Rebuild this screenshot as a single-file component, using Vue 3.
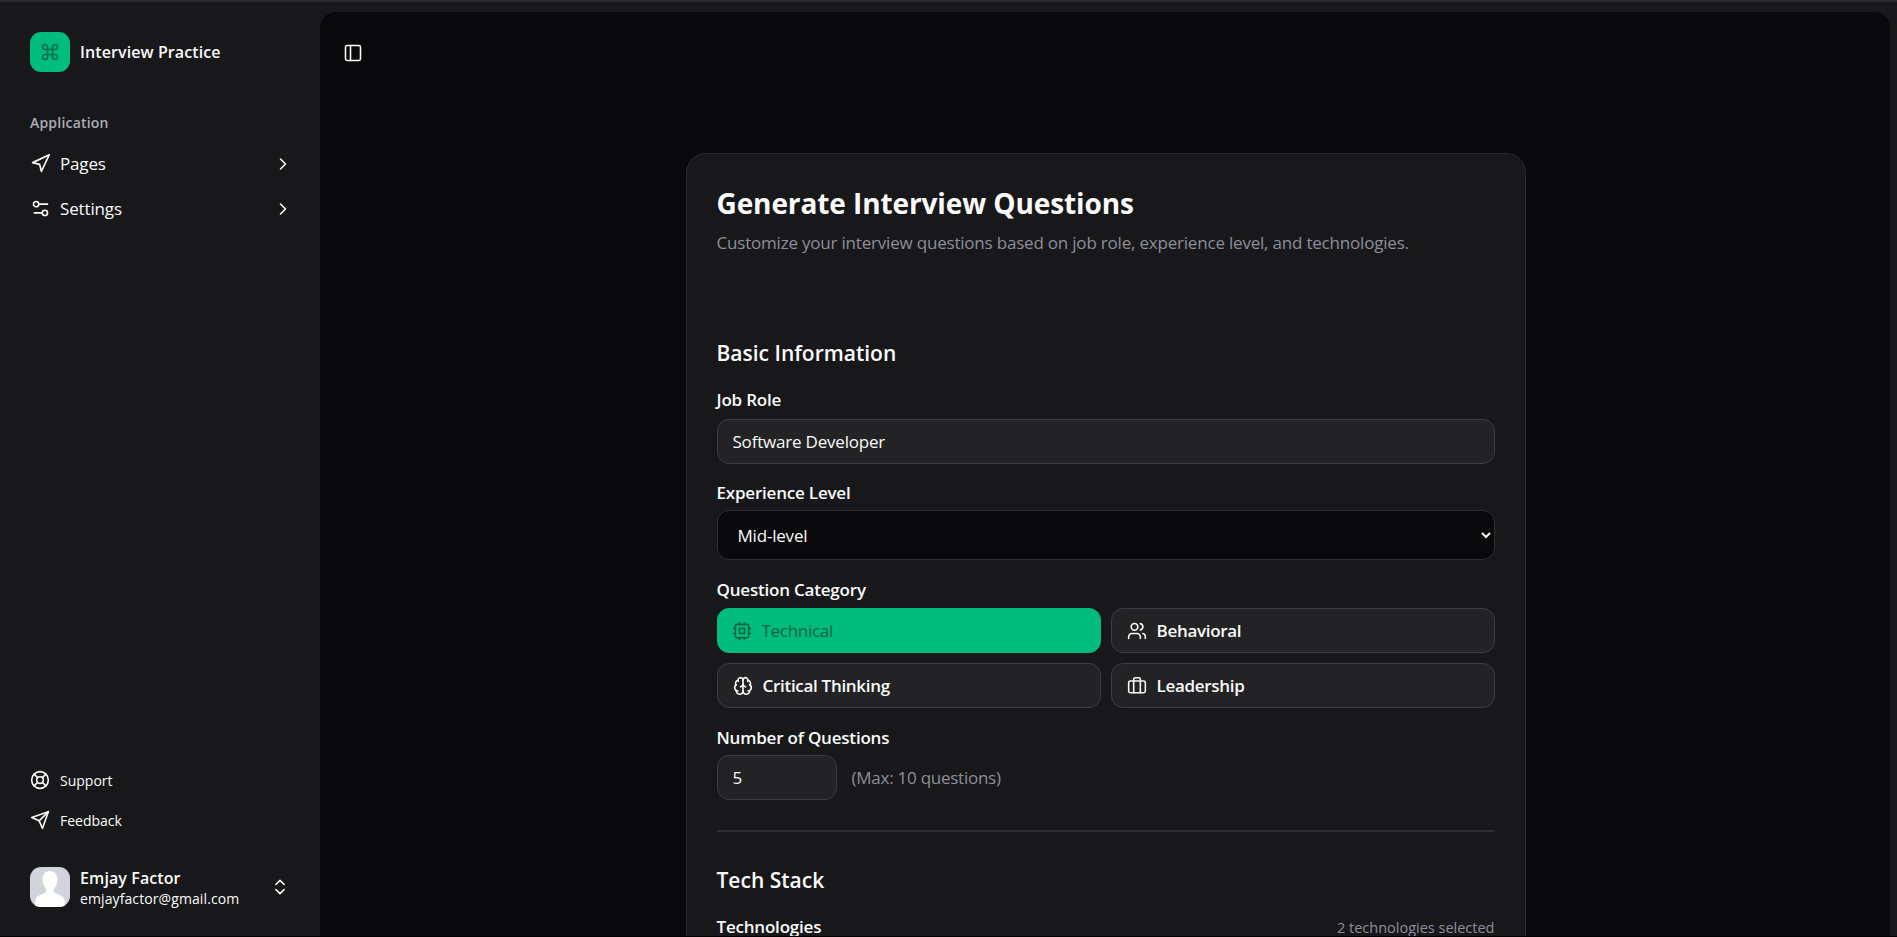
<script setup>
import { ref } from "vue";

const categories = [
  { key: "technical", label: "Technical", active: true },
  { key: "behavioral", label: "Behavioral", active: false },
  { key: "critical", label: "Critical Thinking", active: false },
  { key: "leadership", label: "Leadership", active: false },
];
const jobRole = ref("Software Developer");
const level = ref("Mid-level");
const count = ref(5);
</script>

<template>
  <div class="shell">
    <aside class="sidebar">
      <div class="brand">
        <span class="brand__logo">
          <svg class="icon" viewBox="0 0 24 24"><path d="M15 6v12a3 3 0 1 0 3-3H6a3 3 0 1 0 3 3V6a3 3 0 1 0-3 3h12a3 3 0 1 0-3-3" /></svg>
        </span>
        <span class="brand__name">Interview Practice</span>
      </div>

      <div class="nav-group">
        <div class="nav-group__label">Application</div>
        <a class="nav-item">
          <svg class="icon" viewBox="0 0 24 24"><polygon points="3 11 22 2 13 21 11 13 3 11" /></svg>
          <span>Pages</span>
          <svg class="icon chevron" viewBox="0 0 24 24"><path d="m9 18 6-6-6-6" /></svg>
        </a>
        <a class="nav-item">
          <svg class="icon" viewBox="0 0 24 24"><path d="M20 7h-9" /><path d="M14 17H5" /><circle cx="17" cy="17" r="3" /><circle cx="7" cy="7" r="3" /></svg>
          <span>Settings</span>
          <svg class="icon chevron" viewBox="0 0 24 24"><path d="m9 18 6-6-6-6" /></svg>
        </a>
      </div>

      <div class="sidebar__bottom">
        <a class="sub-item">
          <svg class="icon" viewBox="0 0 24 24"><circle cx="12" cy="12" r="10" /><path d="m4.930 4.930 4.240 4.240" /><path d="m14.830 9.170 4.240-4.240" /><path d="m14.830 14.830 4.240 4.240" /><path d="m9.170 14.830-4.240 4.240" /><circle cx="12" cy="12" r="4" /></svg>
          <span>Support</span>
        </a>
        <a class="sub-item">
          <svg class="icon" viewBox="0 0 24 24"><path d="m22 2-7 20-4-9-9-4Z" /><path d="M22 2 11 13" /></svg>
          <span>Feedback</span>
        </a>
        <div class="user">
          <span class="user__avatar">
            <svg viewBox="0 0 40 40"><path d="M20 4c-4.500 0-7.500 3.500-7.500 8.500 0 3.500 1.500 7 3.500 9 .4 1.500.3 3-.5 4-2 1.500-7 2.500-9 5-1.200 1.500-1.500 5-1.500 9.500h30c0-4.500-.3-8-1.500-9.500-2-2.500-7-3.500-9-5-.8-1-.9-2.500-.5-4 2-2 3.500-5.500 3.500-9C27.500 7.500 24.500 4 20 4Z" /></svg>
          </span>
          <span class="user__text">
            <span class="user__name">Emjay Factor</span>
            <span class="user__email">emjayfactor@gmail.com</span>
          </span>
          <svg class="icon user__caret" viewBox="0 0 24 24"><path d="m7 15 5 5 5-5" /><path d="m7 9 5-5 5 5" /></svg>
        </div>
      </div>
    </aside>

    <main class="main">
      <button class="toggle" type="button" aria-label="Toggle sidebar">
        <svg class="icon" viewBox="0 0 24 24"><rect x="3" y="3" width="18" height="18" rx="2" /><path d="M9 3v18" /></svg>
      </button>

      <section class="card">
        <h1>Generate Interview Questions</h1>
        <p class="card__sub">Customize your interview questions based on job role, experience level, and technologies.</p>

        <h2 class="section-title">Basic Information</h2>

        <label class="field-label field-label--first">Job Role</label>
        <input v-model="jobRole" class="input" type="text" />

        <label class="field-label field-label--level">Experience Level</label>
        <select v-model="level" class="select">
          <option>Junior</option>
          <option>Mid-level</option>
          <option>Senior</option>
        </select>

        <label class="field-label">Question Category</label>
        <div class="cat-grid">
          <button
            v-for="cat in categories"
            :key="cat.key"
            type="button"
            class="cat"
            :class="{ 'cat--active': cat.active }"
          >
            <svg v-if="cat.key === 'technical'" class="icon" viewBox="0 0 24 24"><rect x="4" y="4" width="16" height="16" rx="2" /><rect x="9" y="9" width="6" height="6" /><path d="M15 2v2M15 20v2M2 15h2M2 9h2M20 15h2M20 9h2M9 2v2M9 20v2" /></svg>
            <svg v-else-if="cat.key === 'behavioral'" class="icon" viewBox="0 0 24 24"><path d="M16 21v-2a4 4 0 0 0-4-4H6a4 4 0 0 0-4 4v2" /><circle cx="9" cy="7" r="4" /><path d="M22 21v-2a4 4 0 0 0-3-3.870" /><path d="M16 3.130a4 4 0 0 1 0 7.750" /></svg>
            <svg v-else-if="cat.key === 'critical'" class="icon" viewBox="0 0 24 24"><path d="M12 18V5" /><path d="M15 13a4.170 4.170 0 0 1-3-4 4.170 4.170 0 0 1-3 4" /><path d="M17.598 6.500A3 3 0 1 0 12 5a3 3 0 1 0-5.598 1.500" /><path d="M17.997 5.125a4 4 0 0 1 2.526 5.770" /><path d="M18 18a4 4 0 0 0 2-7.464" /><path d="M19.967 17.483A4 4 0 1 1 12 18a4 4 0 1 1-7.967-.517" /><path d="M6 18a4 4 0 0 1-2-7.464" /><path d="M6.003 5.125a4 4 0 0 0-2.526 5.770" /></svg>
            <svg v-else class="icon" viewBox="0 0 24 24"><rect x="2" y="6" width="20" height="14" rx="2" /><path d="M16 20V4a2 2 0 0 0-2-2h-4a2 2 0 0 0-2 2v16" /></svg>
            <span>{{ cat.label }}</span>
          </button>
        </div>

        <label class="field-label">Number of Questions</label>
        <div class="num-row">
          <input v-model="count" class="input input--num" type="text" />
          <span class="muted">(Max: 10 questions)</span>
        </div>

        <hr class="divider" />

        <h2 class="section-title section-title--stack">Tech Stack</h2>
        <div class="tech-head">
          <label class="field-label field-label--tech">Technologies</label>
          <span class="tech-count">2 technologies selected</span>
        </div>
      </section>
    </main>
  </div>
</template>

<style>
html,
body {
  margin: 0;
  background: #000;
  overflow: hidden;
}
</style>

<style scoped>
.shell {
  display: flex;
  height: 934px;
  border-top: 2px solid #2a2a2d;
  border-bottom: 1px solid #000;
  background: #18181b;
  color: #fafafa;
  font-family: "Open Sans", "Noto Sans", sans-serif;
  overflow: hidden;
}
.icon {
  width: 20px;
  height: 20px;
  flex: none;
  fill: none;
  stroke: currentColor;
  stroke-width: 1.9;
  stroke-linecap: round;
  stroke-linejoin: round;
}
.sidebar {
  width: 320px;
  flex: none;
  display: flex;
  flex-direction: column;
  padding: 30px 30px 29px;
  box-sizing: border-box;
}
.brand {
  display: flex;
  align-items: center;
  gap: 10px;
}
.brand__logo {
  width: 40px;
  height: 40px;
  border-radius: 11px;
  background: #00bc7d;
  color: #0b6b4a;
  display: flex;
  align-items: center;
  justify-content: center;
}
.brand__name {
  font-size: 16px;
  font-weight: 600;
  letter-spacing: 0.1px;
}
.nav-group {
  margin-top: 41px;
}
.nav-group__label {
  font-size: 14px;
  font-weight: 600;
  color: #adadb5;
  letter-spacing: 0.2px;
  line-height: 20px;
  margin-bottom: 8px;
}
.nav-item {
  display: flex;
  align-items: center;
  gap: 9px;
  height: 45px;
  font-size: 17px;
  letter-spacing: -0.15px;
}
.nav-item .icon:first-child {
  width: 21px;
  height: 21px;
}
.nav-item span {
  flex: 1;
}
.chevron {
  margin-right: -3px;
}
.sidebar__bottom {
  margin-top: auto;
}
.sub-item {
  display: flex;
  align-items: center;
  gap: 10px;
  height: 40px;
  font-size: 14px;
}
.user {
  display: flex;
  align-items: center;
  gap: 10px;
  height: 40px;
  margin-top: 27px;
}
.user__avatar {
  width: 40px;
  height: 40px;
  border-radius: 11px;
  background: #d1d5db;
  overflow: hidden;
  flex: none;
}
.user__avatar svg {
  display: block;
  width: 40px;
  height: 40px;
  fill: #fff;
}
.user__text {
  flex: 1;
  display: flex;
  flex-direction: column;
  min-width: 0;
  margin-top: 2px;
}
.user__name {
  font-size: 16px;
  font-weight: 600;
  line-height: 22px;
  letter-spacing: 0.1px;
}
.user__email {
  font-size: 14px;
  line-height: 20px;
  letter-spacing: 0.1px;
}
.main {
  flex: 1;
  margin: 10px 7px 0 0;
  border-radius: 16px 16px 0 0;
  background: #09090b;
  padding: 31px 0 0;
  display: flex;
  flex-direction: column;
  overflow: hidden;
}
.toggle {
  align-self: flex-start;
  margin-left: 21px;
  padding: 0;
  height: 24px;
  width: 24px;
  border: 0;
  background: none;
  color: #fafafa;
  display: flex;
  align-items: center;
  justify-content: center;
}
.card {
  flex: none;
  box-sizing: border-box;
  width: 840px;
  align-self: center;
  margin: 90px 0 0 1px;
  padding: 31px 30px 60px;
  border: 1px solid #2c2c2f;
  border-radius: 20px;
  background: #18181b;
}
h1 {
  margin: 0;
  font-size: 28px;
  line-height: 36px;
  font-weight: 700;
  letter-spacing: -0.1px;
}
.card__sub {
  margin: 10px 0 0;
  font-size: 17px;
  line-height: 24px;
  color: #8e8e99;
  letter-spacing: -0.2px;
}
.section-title {
  margin: 84px 0 0;
  font-size: 21px;
  line-height: 28px;
  font-weight: 600;
}
.section-title--stack {
  margin-top: 34px;
}
.field-label {
  display: block;
  margin-top: 18px;
  font-size: 17px;
  line-height: 24px;
  font-weight: 600;
  letter-spacing: -0.2px;
}
.field-label--first {
  margin-top: 21px;
}
.field-label--level {
  margin-top: 17px;
}
.field-label--tech {
  margin-top: 0;
}
.input {
  display: block;
  width: 100%;
  height: 45px;
  margin-top: 7px;
  box-sizing: border-box;
  padding: 0 15px;
  background: #232326;
  border: 1px solid #3d3d41;
  border-radius: 12px;
  color: #fafafa;
  font: inherit;
  font-size: 17px;
  letter-spacing: -0.2px;
  outline: none;
}
.select {
  display: block;
  width: 100%;
  height: 50px;
  margin-top: 5px;
  box-sizing: border-box;
  padding: 0 16px;
  background: #09090b;
  border: 1px solid #2f2f32;
  border-radius: 12px;
  color: #fafafa;
  color-scheme: dark;
  font: inherit;
  font-size: 17px;
  letter-spacing: -0.2px;
  outline: none;
}
.cat-grid {
  display: grid;
  grid-template-columns: 1fr 1fr;
  gap: 10px;
  margin-top: 6px;
}
.cat {
  display: flex;
  align-items: center;
  gap: 10px;
  height: 45px;
  box-sizing: border-box;
  padding: 0 15px;
  background: #232326;
  border: 1px solid #3d3d41;
  border-radius: 12px;
  color: #fafafa;
  font: inherit;
  font-size: 17px;
  font-weight: 600;
  letter-spacing: -0.3px;
  text-align: left;
}
.cat--active {
  padding-left: 14px;
  background: #00bc7d;
  border-color: #00bc7d;
  color: #09603f;
  font-weight: 500;
}
.num-row {
  display: flex;
  align-items: center;
  gap: 15px;
  margin-top: 5px;
}
.input--num {
  width: 120px;
  margin-top: 0;
}
.muted {
  font-size: 17px;
  color: #8e8e99;
  letter-spacing: -0.25px;
}
.divider {
  height: 2px;
  margin: 30px 0 0;
  border: 0;
  background: #2e2e31;
}
.tech-head {
  display: flex;
  align-items: center;
  justify-content: space-between;
  margin-top: 21px;
}
.tech-count {
  font-size: 14.500px;
  color: #8e8e99;
}
</style>
